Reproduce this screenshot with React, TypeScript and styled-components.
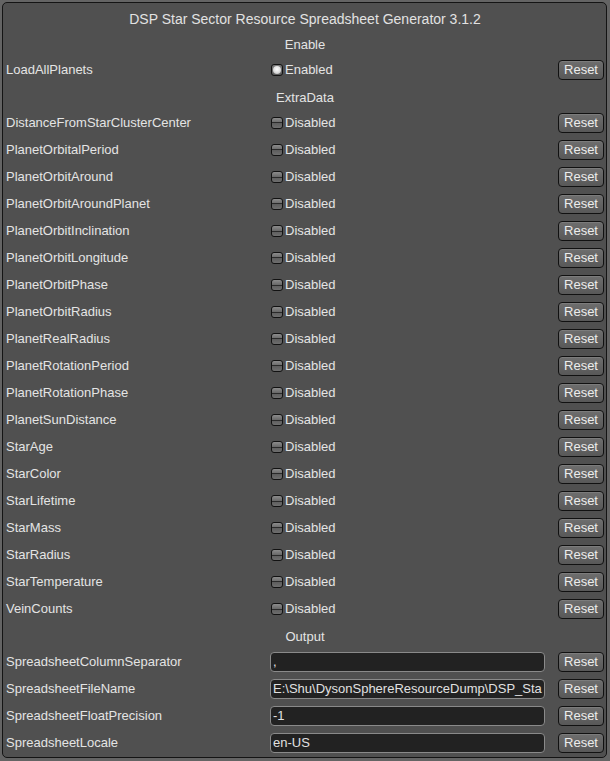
import React from "react";
import styled, { createGlobalStyle } from "styled-components";

const GlobalStyle = createGlobalStyle`
  html, body {
    margin: 0;
    padding: 0;
    background: #646464;
  }
  body {
    padding: 2px 3px 3px 2px;
    font-family: "Liberation Sans", Arial, sans-serif;
  }
`;

const Window = styled.div`
  width: 605px;
  height: 756px;
  box-sizing: border-box;
  border: 1px solid #141414;
  border-radius: 5px;
  background: #505050;
  padding: 3px 2px 0 3px;
  color: #e4e4e4;
  font-size: 13px;
`;

const Title = styled.div`
  height: 26px;
  line-height: 26px;
  text-align: center;
  font-size: 14px;
  color: #e2e2e2;
`;

const Header = styled.div<{ $gap?: number }>`
  height: 23px;
  line-height: 23px;
  margin-top: ${(p) => p.$gap ?? 2}px;
  text-align: center;
`;

const Row = styled.div`
  display: grid;
  grid-template-columns: 264px 1fr 46px;
  align-items: center;
  height: 27px;
`;

const Label = styled.div`
  white-space: nowrap;
`;

const Toggle = styled.div`
  display: flex;
  align-items: center;
  gap: 2px;
  padding-left: 1px;
`;

const Box = styled.span<{ $on?: boolean }>`
  position: relative;
  width: 12px;
  height: 12px;
  box-sizing: border-box;
  border: 1px solid #121212;
  border-radius: 3px;
  background: linear-gradient(#8c8c8c 0%, #6a6a6a 45%, #2a2a2a 45%, #2a2a2a 55%, #5e5e5e 55%, #6e6e6e 100%);

  ${(p) =>
    p.$on &&
    `
    background: linear-gradient(#7a7a7a, #5a5a5a);
    &::after {
      content: "";
      position: absolute;
      left: 1px;
      top: 1px;
      width: 8px;
      height: 8px;
      border-radius: 50%;
      background: radial-gradient(circle at 50% 40%, #ffffff 0%, #e0e0e0 50%, #a8a8a8 100%);
    }
  `}
`;

const ResetButton = styled.button`
  width: 46px;
  height: 20px;
  padding: 0;
  box-sizing: border-box;
  border: 1px solid #111;
  border-radius: 4px;
  background: linear-gradient(#6e6e6e, #585858);
  box-shadow: inset 0 1px 0 #7c7c7c;
  color: #ececec;
  font-family: "Liberation Sans", Arial, sans-serif;
  font-size: 13px;
  line-height: 18px;
`;

const Field = styled.div`
  width: 275px;
  height: 20px;
  box-sizing: border-box;
  border: 1px solid #8a8a8a;
  border-radius: 4px;
  background: #222;
  padding-left: 2px;
  line-height: 18px;
  white-space: nowrap;
  overflow: hidden;
  color: #e0e0e0;
`;

const extra = [
  "DistanceFromStarClusterCenter",
  "PlanetOrbitalPeriod",
  "PlanetOrbitAround",
  "PlanetOrbitAroundPlanet",
  "PlanetOrbitInclination",
  "PlanetOrbitLongitude",
  "PlanetOrbitPhase",
  "PlanetOrbitRadius",
  "PlanetRealRadius",
  "PlanetRotationPeriod",
  "PlanetRotationPhase",
  "PlanetSunDistance",
  "StarAge",
  "StarColor",
  "StarLifetime",
  "StarMass",
  "StarRadius",
  "StarTemperature",
  "VeinCounts",
];

// the field only shows the start of a long path, like the game's text box
const output: [string, string][] = [
  ["SpreadsheetColumnSeparator", ","],
  ["SpreadsheetFileName", "E:\\Shu\\DysonSphereResourceDump\\DSP_Sta"],
  ["SpreadsheetFloatPrecision", "-1"],
  ["SpreadsheetLocale", "en-US"],
];

const ToggleRow = ({ name, on }: { name: string; on?: boolean }) => (
  <Row>
    <Label>{name}</Label>
    <Toggle>
      <Box $on={on} />
      <span>{on ? "Enabled" : "Disabled"}</span>
    </Toggle>
    <ResetButton>Reset</ResetButton>
  </Row>
);

export default function App() {
  return (
    <>
      <GlobalStyle />
      <Window>
        <Title>DSP Star Sector Resource Spreadsheet Generator 3.1.2</Title>
        <Header $gap={1}>Enable</Header>
        <ToggleRow name="LoadAllPlanets" on />
        <Header $gap={3}>ExtraData</Header>
        {extra.map((n) => (
          <ToggleRow key={n} name={n} />
        ))}
        <Header $gap={3}>Output</Header>
        {output.map(([n, v]) => (
          <Row key={n}>
            <Label>{n}</Label>
            <Field>{v}</Field>
            <ResetButton>Reset</ResetButton>
          </Row>
        ))}
      </Window>
    </>
  );
}
